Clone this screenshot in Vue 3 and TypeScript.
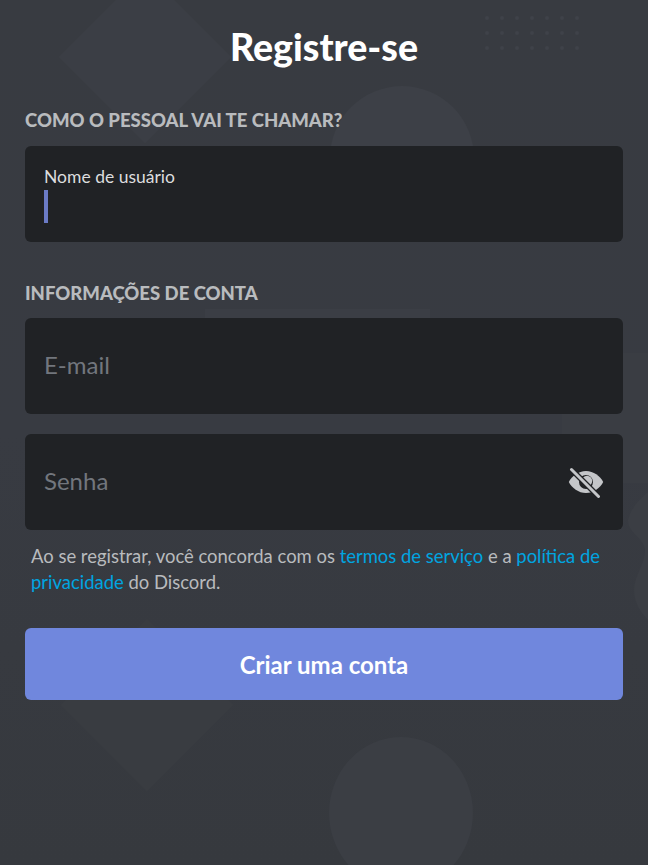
<script setup lang="ts">
const dots: number[] = Array.from({ length: 21 }, (_, i) => i);
</script>

<template>
  <main class="page">
    <div class="bg" aria-hidden="true">
      <div class="diamond diamond-top"></div>
      <div class="diamond diamond-bottom"></div>
      <div class="circle circle-top"></div>
      <div class="circle circle-bottom"></div>
      <div class="slab"></div>
      <div class="side"></div>
      <svg class="blob" viewBox="0 0 40 140" width="40" height="140">
        <path fill="#3b3e44" d="M40 0C30 8 22 18 20 28 19 40 36 46 37 58 37 72 26 84 26 98 26 112 34 122 40 128Z" />
      </svg>
      <div class="dots"><i v-for="d in dots" :key="d"></i></div>
    </div>

    <h1 class="title">Registre-se</h1>

    <section class="group">
      <h2 class="label">COMO O PESSOAL VAI TE CHAMAR?</h2>
      <div class="field filled">
        <span class="float">Nome de usuário</span>
        <span class="caret"></span>
      </div>
    </section>

    <section class="group second">
      <h2 class="label">INFORMAÇÕES DE CONTA</h2>
      <div class="field"><span class="ph">E-mail</span></div>
      <div class="field password">
        <span class="ph">Senha</span>
        <svg class="eye" viewBox="0 0 36 32" width="36" height="32">
          <path fill="#c4c6c9" d="M18 5C10.500 5 3.800 10 .8 16c3 6 9.700 11 17.200 11s14.200-5 17.200-11C32.200 10 25.500 5 18 5Z"/>
          <circle cx="18" cy="16" r="7" fill="#202225"/>
          <circle cx="19" cy="15" r="5.200" fill="#c4c6c9"/>
          <path d="M3 3 31 31" stroke="#202225" stroke-width="5.500" fill="none"/>
          <path d="M3.500 3.500 30.500 30.500" stroke="#c4c6c9" stroke-width="3" stroke-linecap="round" fill="none"/>
        </svg>
      </div>
    </section>

    <p class="terms">Ao se registrar, você concorda com os <a>termos de serviço</a> e a <a>política de privacidade</a> do Discord.</p>

    <button class="submit" type="button">Criar uma conta</button>
  </main>
</template>

<style scoped>
.page {
  position: relative;
  width: 648px;
  height: 865px;
  box-sizing: border-box;
  padding: 0 25px;
  overflow: hidden;
  background: linear-gradient(180deg, #383b41 0%, #383b42 50%, #36393e 100%);
  font-family: Lato, "Open Sans", sans-serif;
}
.bg {
  position: absolute;
  inset: 0;
}
.diamond {
  position: absolute;
  width: 122px;
  height: 122px;
  background: #3b3e45;
  transform: rotate(45deg);
}
.diamond-top {
  left: 84px;
  top: -4px;
}
.diamond-bottom {
  left: 86px;
  top: 644px;
  background: #393c41;
}
.circle {
  position: absolute;
  width: 144px;
  border-radius: 50%;
  background: #3d4047;
}
.circle-top {
  left: 330px;
  top: 86px;
  height: 144px;
}
.circle-bottom {
  left: 329px;
  top: 737px;
  height: 152px;
  background: #3b3e44;
}
.slab {
  position: absolute;
  left: 205px;
  top: 309px;
  width: 225px;
  height: 60px;
  background: #3b3e45;
}
.side {
  position: absolute;
  left: 562px;
  top: 353px;
  width: 86px;
  height: 130px;
  background: #3a3d43;
}
.blob {
  position: absolute;
  left: 608px;
  top: 492px;
}
.dots {
  position: absolute;
  left: 485px;
  top: 16px;
  display: grid;
  grid-template-columns: repeat(7, 4px);
  gap: 11px;
}
.dots i {
  width: 4px;
  height: 4px;
  border-radius: 50%;
  background: #3f4249;
}
.title,
.group,
.terms,
.submit {
  position: relative;
}
.title {
  margin: 0;
  padding-top: 25px;
  height: 110px;
  box-sizing: border-box;
  color: #fff;
  font-size: 37.500px;
  line-height: 44px;
  font-weight: 900;
  text-align: center;
}
.label {
  margin: 0 0 16px;
  height: 20px;
  color: #b9bbbe;
  font-size: 18.500px;
  line-height: 20px;
  font-weight: 900;
}
.second {
  margin-top: 41px;
}
.second .label {
  margin-bottom: 15px;
}
.field {
  position: relative;
  display: flex;
  align-items: center;
  height: 96px;
  box-sizing: border-box;
  padding: 0 19px;
  border-radius: 6px;
  background: #202225;
}
.field + .field {
  margin-top: 20px;
}
.filled {
  display: block;
  padding-top: 20px;
}
.float {
  display: block;
  color: #dcddde;
  font-size: 17.500px;
  line-height: 22px;
}
.caret {
  display: block;
  width: 4px;
  height: 33px;
  margin-top: 2px;
  background: #6b7bc6;
}
.ph {
  color: #72767d;
  font-size: 24px;
  line-height: 30px;
  padding-bottom: 2px;
}
.password {
  justify-content: space-between;
}
.eye {
  display: block;
}
.terms {
  margin: 13px 0 0;
  padding-left: 6px;
  color: #b9bbbe;
  font-size: 18.450px;
  line-height: 26px;
}
.terms a {
  color: #00a5e0;
}
.submit {
  display: block;
  width: 100%;
  height: 72px;
  margin-top: 33px;
  border: 0;
  border-radius: 6px;
  background: #7087dd;
  color: #fff;
  font-family: inherit;
  font-size: 24px;
  font-weight: 700;
}
</style>
